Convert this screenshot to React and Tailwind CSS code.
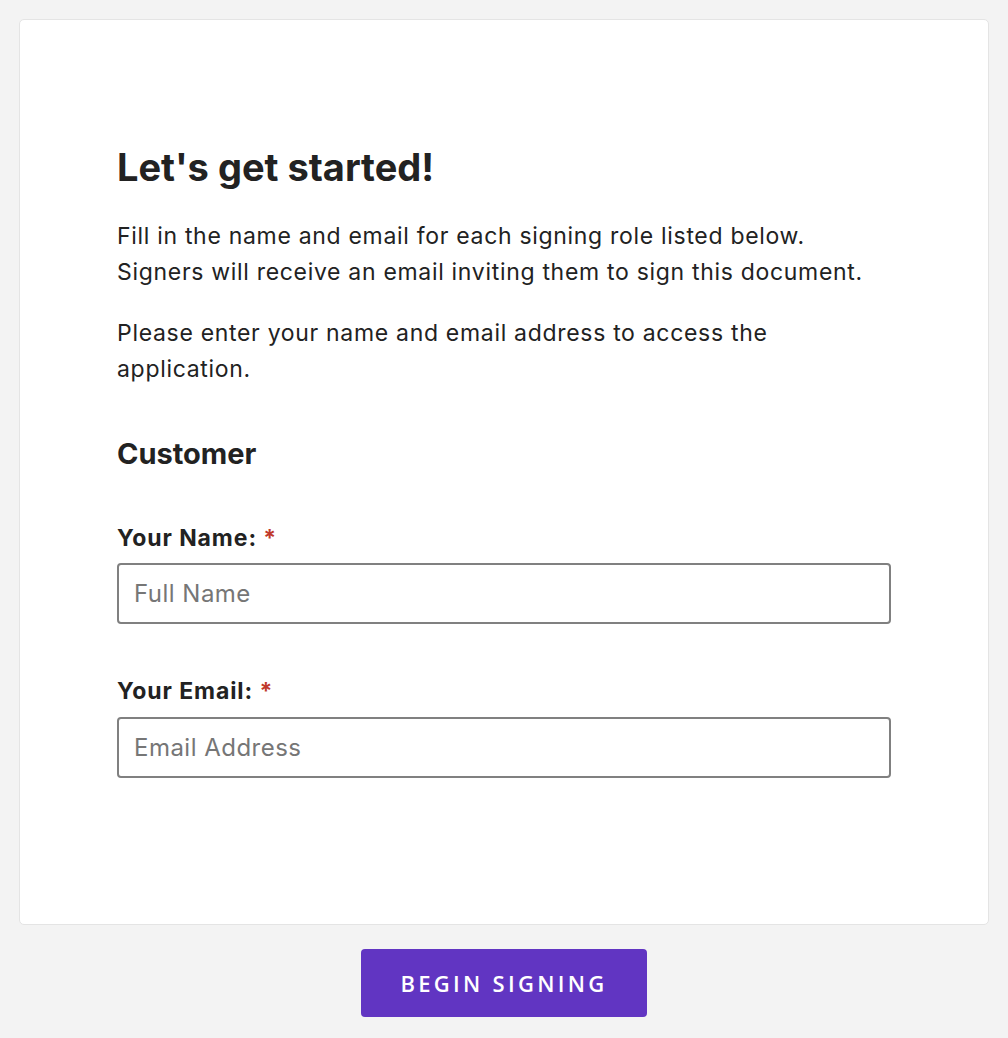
export default function App() {
  const font = { fontFamily: 'Inter, "Liberation Sans", Arial, sans-serif' };
  return (
    <div className="min-h-[1038px] bg-[#f3f3f3] pt-[19px] px-[19px] pb-[21px]" style={font}>
      <div className="bg-white border border-[#e4e4e4] rounded-[5px] h-[906px] pt-[124px] px-[97px] text-[#222222]">
        <h1 className="text-[38px] leading-[46px] font-bold">Let's get started!</h1>
        <p className="mt-[28px] text-[23px] leading-[36px] tracking-[0.03em]">
          Fill in the name and email for each signing role listed below.
          <br />
          Signers will receive an email inviting them to sign this document.
        </p>
        <p className="mt-[25px] text-[23px] leading-[36px] tracking-[0.03em]">
          Please enter your name and email address to access the application.
        </p>
        <h2 className="mt-[49px] text-[29px] leading-[36px] font-bold">Customer</h2>
        <label className="block mt-[51px] text-[23px] leading-[30px] font-bold tracking-[0.04em]">
          Your Name: <span className="text-[#c0392b]">*</span>
        </label>
        <input
          className="mt-[10px] block w-full h-[61px] border-2 border-[#808080] rounded-[4px] px-[15px] text-[24px] tracking-[0.02em] placeholder:text-[#767676] outline-none"
          placeholder="Full Name"
        />
        <label className="block mt-[52px] text-[23px] leading-[30px] font-bold tracking-[0.04em]">
          Your Email: <span className="text-[#c0392b]">*</span>
        </label>
        <input
          className="mt-[11px] block w-full h-[61px] border-2 border-[#808080] rounded-[4px] px-[15px] text-[24px] tracking-[0.02em] placeholder:text-[#767676] outline-none"
          placeholder="Email Address"
        />
      </div>
      <div className="flex justify-center mt-[24px]">
        <button
          className="w-[286px] h-[68px] bg-[#6135c2] rounded-[4px] text-white text-[22px] font-semibold tracking-[0.15em]"
          style={{ fontFamily: '"Open Sans", "Liberation Sans", sans-serif' }}
        >
          BEGIN SIGNING
        </button>
      </div>
    </div>
  );
}
